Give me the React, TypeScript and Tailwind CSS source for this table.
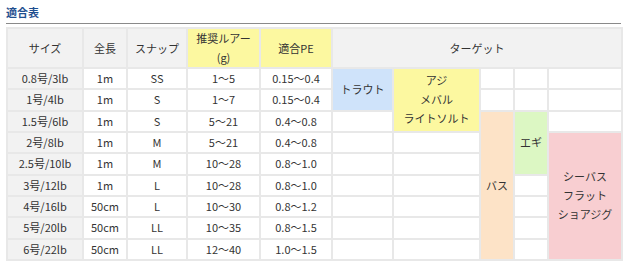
const font = "font-['Meiryo','Noto_Sans_CJK_JP',sans-serif]";

type Cell = { t?: string; rs?: number; bg?: string };

const rows: { base: string[]; rest: Cell[] }[] = [
  {
    base: ["0.8号/3lb", "1m", "SS", "1～5", "0.15～0.4"],
    rest: [
      { t: "トラウト", rs: 2, bg: "bg-[#cfe3fa]" },
      { t: "アジ\nメバル\nライトソルト", rs: 3, bg: "bg-[#fcf8a0]" },
      {},
      {},
      {},
    ],
  },
  { base: ["1号/4lb", "1m", "S", "1～7", "0.15～0.4"], rest: [{}, {}, {}] },
  {
    base: ["1.5号/6lb", "1m", "S", "5～21", "0.4～0.8"],
    rest: [
      {},
      { t: "バス", rs: 7, bg: "bg-[#fde3c7]" },
      { t: "エギ", rs: 3, bg: "bg-[#dcf7c3]" },
      {},
    ],
  },
  {
    base: ["2号/8lb", "1m", "M", "5～21", "0.4～0.8"],
    rest: [{}, {}, { t: "シーバス\nフラット\nショアジグ", rs: 6, bg: "bg-[#f8ced1]" }],
  },
  { base: ["2.5号/10lb", "1m", "M", "10～28", "0.8～1.0"], rest: [{}, {}] },
  { base: ["3号/12lb", "1m", "L", "10～28", "0.8～1.0"], rest: [{}, {}, {}] },
  { base: ["4号/16lb", "50cm", "L", "10～30", "0.8～1.2"], rest: [{}, {}, {}] },
  { base: ["5号/20lb", "50cm", "LL", "10～35", "0.8～1.5"], rest: [{}, {}, {}] },
  { base: ["6号/22lb", "50cm", "LL", "12～40", "1.0～1.5"], rest: [{}, {}, {}] },
];

const widths = [76, 44, 60, 73, 72, 61, 87, 34, 34, 74];
const td = "border-2 border-[#e8e8e8] text-center align-middle p-0";

export default function App() {
  return (
    <div className={`w-[630px] h-[272px] bg-white px-[6px] pt-[4px] text-[#333] ${font}`}>
      <div className="w-[615px] border-b border-[#8a8a8a] pb-[3px] text-[11px] leading-[16px] font-bold text-[#1f4f8f]">
        適合表
      </div>
      <table className="mt-[3px] w-[615px] table-fixed border-collapse text-[11px] leading-[19px]">
        <colgroup>
          {widths.map((w, i) => (
            <col key={i} style={{ width: w }} />
          ))}
        </colgroup>
        <thead>
          <tr className="h-[38px]">
            <th className={`${td} font-normal bg-[#f2f2f2]`}>サイズ</th>
            <th className={`${td} font-normal bg-[#f2f2f2]`}>全長</th>
            <th className={`${td} font-normal bg-[#f2f2f2]`}>スナップ</th>
            <th className={`${td} font-normal bg-[#fcf8a0]`}>
              推奨ルアー
              <br />
              (g)
            </th>
            <th className={`${td} font-normal bg-[#fcf8a0]`}>適合PE</th>
            <th colSpan={5} className={`${td} font-normal bg-[#f2f2f2]`}>
              ターゲット
            </th>
          </tr>
        </thead>
        <tbody>
          {rows.map((r, i) => (
            <tr key={i} className="h-[21.33px]">
              {r.base.map((b, j) => (
                <td key={j} className={`${td} ${j === 0 ? "bg-[#f2f2f2]" : "bg-white"}`}>
                  {b}
                </td>
              ))}
              {r.rest.map((c, j) => (
                <td
                  key={"r" + j}
                  rowSpan={c.rs}
                  className={`${td} whitespace-pre-line ${c.bg ?? "bg-white"}`}
                >
                  {c.t}
                </td>
              ))}
            </tr>
          ))}
        </tbody>
      </table>
    </div>
  );
}
